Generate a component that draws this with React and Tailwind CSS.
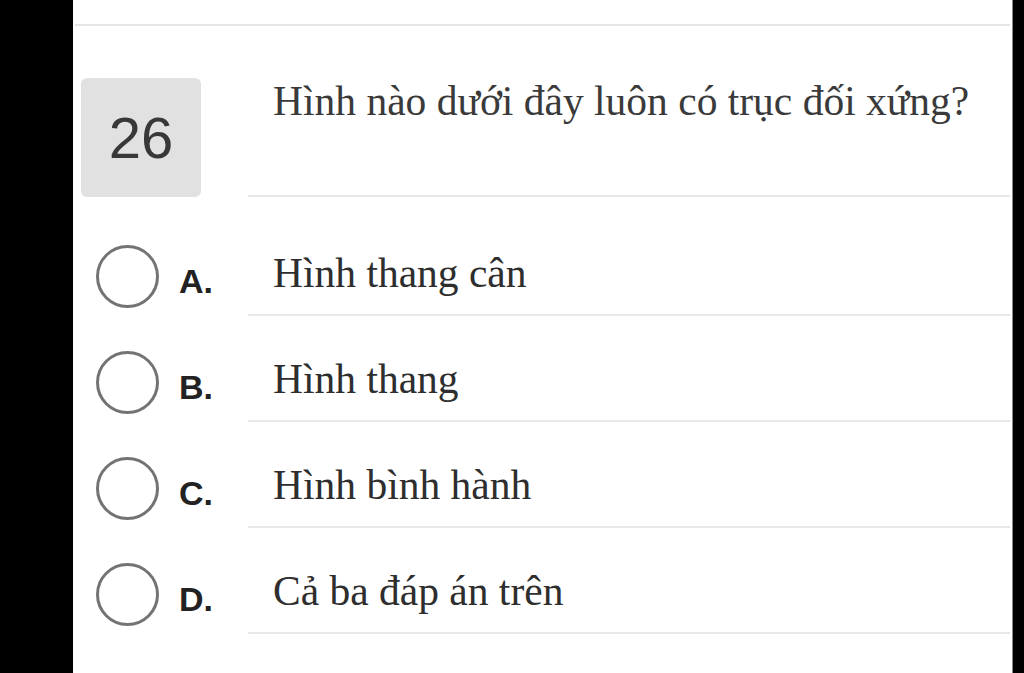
export default function App() {
  const options = [
    { letter: "A.", text: "Hình thang cân" },
    { letter: "B.", text: "Hình thang" },
    { letter: "C.", text: "Hình bình hành" },
    { letter: "D.", text: "Cả ba đáp án trên" },
  ];
  const serif = { fontFamily: '"Liberation Serif", "Times New Roman", serif' };
  const sans = { fontFamily: '"Liberation Sans", Arial, sans-serif' };
  return (
    <div className="w-[1024px] h-[673px] bg-black flex overflow-hidden">
      <div className="w-[73px] shrink-0" />
      <div className="w-[940px] shrink-0 bg-white flex flex-col border-r border-[#8a8a8a]">
        <div className="h-[26px] mx-[2px] border-b-2 border-[#e6e6e6]" />
        <div className="flex mt-[52px]">
          <div
            className="ml-[8px] w-[120px] h-[119px] rounded-[6px] bg-[#e1e1e1] flex items-center justify-center text-[58px] text-[#383838]"
            style={sans}
          >
            26
          </div>
          <div className="ml-[47px] mr-[2px] flex-1 h-[119px] border-b-2 border-[#e8e8e8] pl-[25px]">
            <div className="text-[41.5px] leading-[47px] text-[#3a3a3a]" style={serif}>
              Hình nào dưới đây luôn có trục đối xứng?
            </div>
          </div>
        </div>
        <div className="flex flex-col pt-[13px]">
          {options.map((o) => (
            <div key={o.letter} className="flex h-[106px]">
              <div className="w-[175px] shrink-0 flex items-start">
                <div className="ml-[23px] mt-[35px] w-[63px] h-[63px] rounded-full border-[3px] border-[#737373]" />
                <div
                  className="ml-[20px] mt-[55px] text-[34px] leading-[32px] font-bold text-[#222]"
                  style={sans}
                >
                  {o.letter}
                </div>
              </div>
              <div className="flex-1 mr-[2px] border-b-2 border-[#e8e8e8] pl-[25px] pt-[40px]">
                <div className="text-[41.5px] leading-[47px] text-[#2e2e2e]" style={serif}>
                  {o.text}
                </div>
              </div>
            </div>
          ))}
        </div>
      </div>
    </div>
  );
}
